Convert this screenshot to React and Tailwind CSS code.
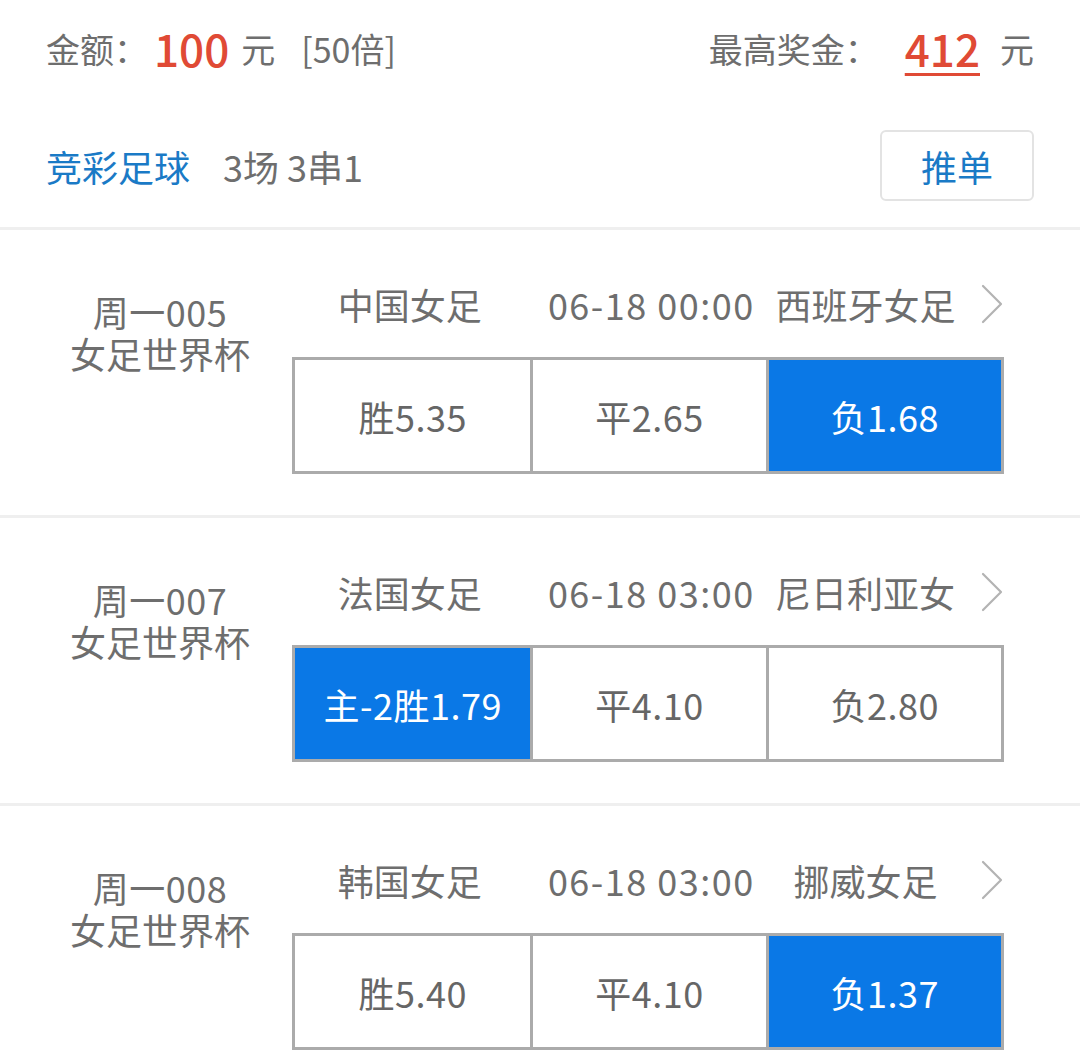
import React from "react";

const FONT = { fontFamily: '"Noto Sans CJK SC", "Noto Sans", sans-serif' };

function Chevron() {
  return (
    <svg width="24" height="40" viewBox="0 0 24 40" className="shrink-0">
      <polyline points="3,2 21,20 3,38" fill="none" stroke="#b3b3b3" strokeWidth="2.2" strokeLinecap="round" strokeLinejoin="round" />
    </svg>
  );
}

const matches = [
  {
    no: "周一005",
    home: "中国女足",
    time: "06-18 00:00",
    away: "西班牙女足",
    odds: ["胜5.35", "平2.65", "负1.68"],
    sel: 2,
  },
  {
    no: "周一007",
    home: "法国女足",
    time: "06-18 03:00",
    away: "尼日利亚女足",
    odds: ["主-2胜1.79", "平4.10", "负2.80"],
    sel: 0,
  },
  {
    no: "周一008",
    home: "韩国女足",
    time: "06-18 03:00",
    away: "挪威女足",
    odds: ["胜5.40", "平4.10", "负1.37"],
    sel: 2,
  },
];

function Match({ m, last }) {
  return (
    <div className={last ? "" : "border-b-[3px] border-[#efefef]"}>
      <div className="flex h-[285px]">
        <div className="w-[292px] pl-[28px] pt-[58px] text-center text-[36px] leading-[46px] text-[#6e6e6e]">
          <div className="tracking-[0.5px]">{m.no}</div>
          <div className="-mt-[4px]">女足世界杯</div>
        </div>
        <div className="w-[712px] pt-[49px]">
          <div className="flex h-[50px] items-center text-[36px] text-[#6e6e6e] whitespace-nowrap">
            <div className="w-[237px] text-center">{m.home}</div>
            <div className="w-[249px] text-center tracking-[1.5px]">{m.time}</div>
            <div className="w-[182px] overflow-hidden text-center">{m.away}</div>
            <div className="ml-[24px] flex items-center">
              <Chevron />
            </div>
          </div>
          <div className="mt-[28px] grid h-[117px] grid-cols-3 border-[3px] border-[#ababab]">
            {m.odds.map((o, i) => (
              <div
                key={i}
                className={
                  "flex items-center justify-center text-[36px] tracking-[0.5px] " +
                  (i > 0 ? "border-l-[3px] border-[#ababab] " : "") +
                  (i === m.sel ? "bg-[#0a78e6] text-white" : "bg-white text-[#666666]")
                }
              >
                {o}
              </div>
            ))}
          </div>
        </div>
      </div>
    </div>
  );
}

export default function App() {
  return (
    <div className="h-[1050px] w-[1080px] overflow-hidden bg-white" style={FONT}>
      <div className="px-[46px]">
        <div className="flex h-[96px] items-center justify-between text-[34px] text-[#6e6e6e] whitespace-nowrap">
          <div className="flex items-center">
            <span>金额：</span>
            <span className="ml-[6px] text-[44px] font-medium text-[#e04a35]">100</span>
            <span className="ml-[12px]">元</span>
            <span className="ml-[26px]">[50倍]</span>
          </div>
          <div className="flex items-center">
            <span>最高奖金：</span>
            <span className="ml-[26px] text-[44px] font-medium text-[#e04a35] underline decoration-[3px] underline-offset-[6px]">412</span>
            <span className="ml-[20px]">元</span>
          </div>
        </div>
        <div className="flex h-[131px] items-center justify-between pt-[8px]">
          <div className="flex items-center text-[36px] whitespace-nowrap">
            <span className="text-[#1a7ac6]">竞彩足球</span>
            <span className="ml-[33px] text-[#6e6e6e]">3场 3串1</span>
          </div>
          <div className="flex h-[71px] w-[154px] items-center justify-center rounded-[6px] border-[2px] border-[#e3e3e3] text-[36px] text-[#1a7ac6]">
            推单
          </div>
        </div>
      </div>
      <div className="h-[3px] bg-[#efefef]" />
      {matches.map((m, i) => (
        <Match key={i} m={m} last={i === matches.length - 1} />
      ))}
    </div>
  );
}
